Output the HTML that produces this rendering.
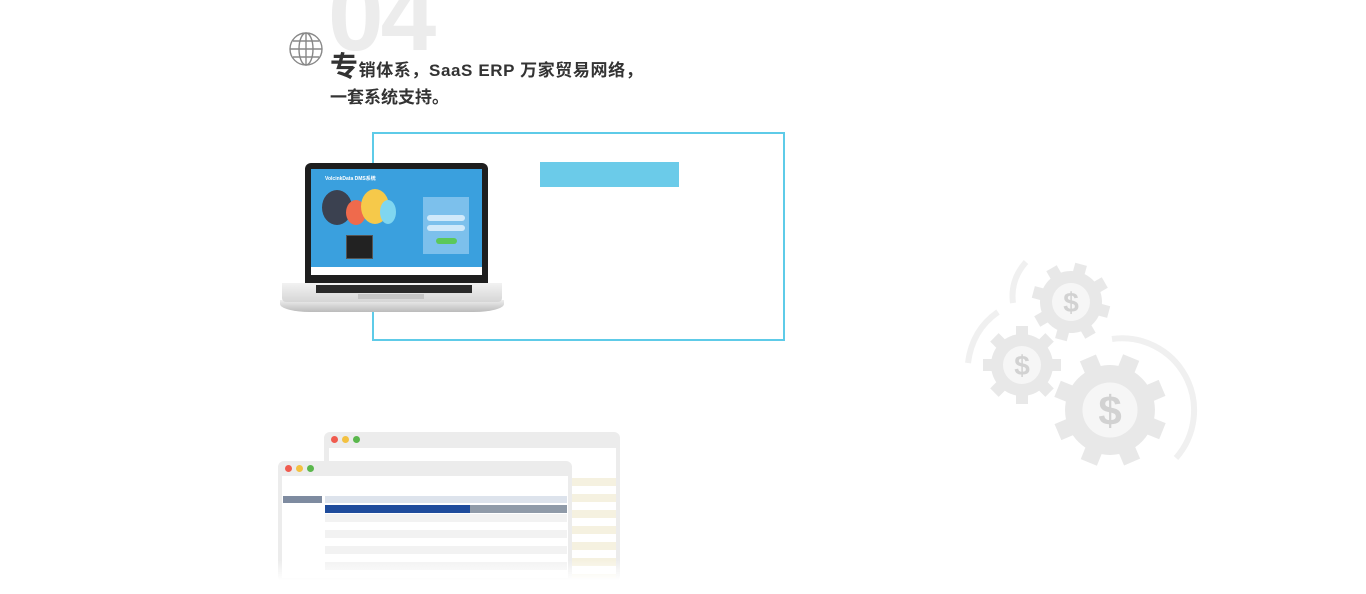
<!DOCTYPE html>
<html><head><meta charset="utf-8"><style>
body{margin:0;width:1366px;height:594px;background:#fff;position:relative;overflow:hidden;font-family:"Liberation Sans","Noto Sans CJK SC",sans-serif}
.a{position:absolute}
</style></head><body>
<div class="a" style="left:328px;top:-34px;font-size:100px;font-weight:bold;color:#ececec;letter-spacing:-3px;line-height:100px">04</div>
<svg class="a" style="left:288px;top:31px" width="36" height="36" viewBox="0 0 36 36" fill="none" stroke="#888" stroke-width="1.4"><circle cx="18" cy="18" r="16"/><ellipse cx="18" cy="18" rx="7" ry="16"/><line x1="18" y1="2" x2="18" y2="34"/><line x1="2" y1="18" x2="34" y2="18"/><line x1="5" y1="10" x2="31" y2="10"/><line x1="5" y1="26" x2="31" y2="26"/></svg>
<div class="a" style="left:330px;top:52px;font-size:17px;font-weight:bold;color:#333;line-height:30px;letter-spacing:0.6px"><span style="font-size:28px">专</span>销体系，SaaS ERP 万家贸易网络，</div>
<div class="a" style="left:330px;top:86px;font-size:17px;font-weight:bold;color:#333;line-height:24px">一套系统支持。</div>
<div class="a" style="left:372px;top:132px;width:409px;height:205px;border:2px solid #5ecbe8"></div>
<div class="a" style="left:540px;top:162px;width:139px;height:25px;background:#6bcbe9"></div>
<!-- laptop -->
<div class="a" style="left:280px;top:300px;width:224px;height:12px;background:linear-gradient(#eee,#bbb);border-radius:0 0 30px 30px/0 0 8px 8px"></div>
<div class="a" style="left:305px;top:163px;width:183px;height:122px;background:#1e1e1e;border-radius:6px 6px 0 0"></div>
<div class="a" style="left:311px;top:169px;width:171px;height:105px;background:#3aa0de"></div>
<div class="a" style="left:311px;top:267px;width:171px;height:8px;background:#fff"></div>
<div class="a" style="left:325px;top:175px;color:#fff;font-size:5px;font-weight:bold">VolcinkData DMS系统</div>
<div class="a" style="left:322px;top:190px;width:30px;height:35px;border-radius:50%;background:#3b4150"></div>
<div class="a" style="left:346px;top:200px;width:20px;height:25px;border-radius:50%;background:#ef6a4c"></div>
<div class="a" style="left:361px;top:189px;width:28px;height:35px;border-radius:50%;background:#f6c94a"></div>
<div class="a" style="left:380px;top:200px;width:16px;height:24px;border-radius:50%;background:#7fd6f0"></div>
<div class="a" style="left:346px;top:235px;width:25px;height:22px;background:#222;border:1px solid #555"></div>
<div class="a" style="left:423px;top:197px;width:46px;height:57px;background:#7cc0ec"></div>
<div class="a" style="left:427px;top:215px;width:38px;height:6px;border-radius:3px;background:#d0e9fa"></div>
<div class="a" style="left:427px;top:225px;width:38px;height:6px;border-radius:3px;background:#d0e9fa"></div>
<div class="a" style="left:436px;top:238px;width:21px;height:6px;border-radius:3px;background:#5bc85a"></div>
<div class="a" style="left:282px;top:283px;width:220px;height:19px;background:linear-gradient(#f2f2f2,#d6d6d6);border-radius:0 0 4px 4px"></div>
<div class="a" style="left:316px;top:285px;width:156px;height:8px;background:#2a2a2a"></div>
<div class="a" style="left:358px;top:294px;width:66px;height:5px;background:#c5c5c5"></div>
<!-- gears -->
<svg class="a" style="left:955px;top:250px" width="245" height="225" viewBox="955 250 245 225">
<defs><g id="g"><circle r="31" fill="#e8e8e8"/><g fill="#e8e8e8"><rect x="-6" y="-39" width="12" height="78"/><rect x="-6" y="-39" width="12" height="78" transform="rotate(45)"/><rect x="-6" y="-39" width="12" height="78" transform="rotate(90)"/><rect x="-6" y="-39" width="12" height="78" transform="rotate(135)"/></g><circle r="19" fill="#f6f6f6"/></g></defs>
<use href="#g" transform="translate(1071,302) rotate(15)"/>
<use href="#g" transform="translate(1022,365)"/>
<use href="#g" transform="translate(1110,410) scale(1.45) rotate(22)"/>
<g fill="none" stroke="#f0f0f0" stroke-width="6"><path d="M1026 262 Q1010 280 1013 303"/><path d="M998 312 Q972 330 968 363"/><path d="M1112 339 A72 72 0 0 1 1176 458"/></g>
<g fill="#d2d2d2" font-weight="bold" text-anchor="middle" font-family="Liberation Sans"><text x="1071" y="312" font-size="28">$</text><text x="1022" y="375" font-size="28">$</text><text x="1110" y="425" font-size="42">$</text></g>
</svg>
<!-- windows -->
<div class="a" style="left:324px;top:432px;width:296px;height:150px;background:#ececec;border-radius:6px"></div>
<div class="a" style="left:331px;top:436px;width:7px;height:7px;border-radius:50%;background:#f05b4f"></div>
<div class="a" style="left:342px;top:436px;width:7px;height:7px;border-radius:50%;background:#f3c141"></div>
<div class="a" style="left:353px;top:436px;width:7px;height:7px;border-radius:50%;background:#5ab74c"></div>
<div class="a" style="left:329px;top:448px;width:287px;height:130px;background:#fff"></div>
<div class="a" style="left:570px;top:470px;width:46px;height:108px;background:repeating-linear-gradient(#fff 0 8px,#f5f1e0 8px 16px)"></div>
<div class="a" style="left:278px;top:461px;width:294px;height:121px;background:#ececec;border-radius:6px"></div>
<div class="a" style="left:285px;top:465px;width:7px;height:7px;border-radius:50%;background:#f05b4f"></div>
<div class="a" style="left:296px;top:465px;width:7px;height:7px;border-radius:50%;background:#f3c141"></div>
<div class="a" style="left:307px;top:465px;width:7px;height:7px;border-radius:50%;background:#5ab74c"></div>
<div class="a" style="left:282px;top:476px;width:286px;height:102px;background:#fff"></div>
<div class="a" style="left:283px;top:496px;width:39px;height:7px;background:#7e8ba0"></div>
<div class="a" style="left:325px;top:496px;width:242px;height:7px;background:#dde3ec"></div>
<div class="a" style="left:325px;top:505px;width:145px;height:8px;background:#1f4c9c"></div>
<div class="a" style="left:470px;top:505px;width:97px;height:8px;background:#8f9aa8"></div>
<div class="a" style="left:325px;top:514px;width:242px;height:64px;background:repeating-linear-gradient(#f2f2f2 0 8px,#fff 8px 16px)"></div>
<div class="a" style="left:0;top:560px;width:1366px;height:34px;background:linear-gradient(rgba(255,255,255,0),#fff 60%)"></div>
</body></html>
